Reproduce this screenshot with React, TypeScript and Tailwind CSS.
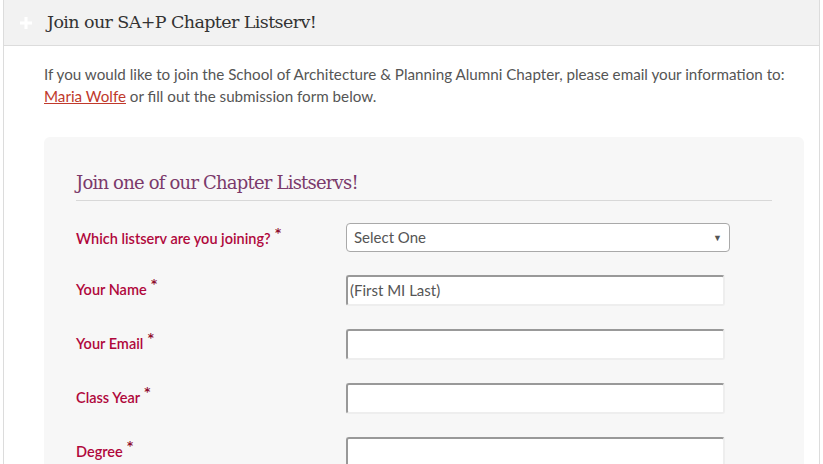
import React from "react";

const fields = [
  { label: "Your Name", placeholder: "(First MI Last)" },
  { label: "Your Email", placeholder: "" },
  { label: "Class Year", placeholder: "" },
  { label: "Degree", placeholder: "" },
];

function Label({ text }: { text: string }) {
  return (
    <label className="text-[14.5px] font-semibold text-[#b0083c] font-['Lato',sans-serif]">
      {text} <span className="relative -top-[3px] text-[18px] leading-none text-[#8e0b2c]">*</span>
    </label>
  );
}

export default function App() {
  return (
    <div className="h-[464px] overflow-hidden bg-white pl-[3px] pr-[3px]">
      <div className="border-x border-[#dcdcdc] min-h-[464px]">
        <div className="h-[46px] bg-[#f2f2f2] border-b border-[#dcdcdc] flex items-center">
          <span className="w-[43px] flex justify-center">
            <svg width="12" height="12" viewBox="0 0 12 12">
              <path d="M4.5 0h3v4.5H12v3H7.5V12h-3V7.5H0v-3h4.5z" fill="#fff" />
            </svg>
          </span>
          <h2 className="text-[17.5px] text-[#333] font-['DejaVu_Serif',serif] tracking-[-0.6px]">Join our SA+P Chapter Listserv!</h2>
        </div>

        <div className="pl-[40px] pr-[15px] pt-[17px] font-['Lato',sans-serif]">
          <p className="text-[15.2px] leading-[22px] text-[#555]">
            If you would like to join the School of Architecture &amp; Planning Alumni Chapter, please email your information to:{" "}
            <a className="text-[#c0392b] underline">Maria Wolfe</a> or fill out the submission form below.
          </p>

          <div className="mt-[30px] bg-[#f7f7f7] rounded-[6px] px-[32px] pt-[32px] pb-[40px]">
            <h3 className="text-[18px] text-[#7b3a6b] font-['DejaVu_Serif',serif] tracking-[-0.8px] pb-[4px] border-b border-[#d8d8d8]">
              Join one of our Chapter Listservs!
            </h3>

            <div className="mt-[22px] flex items-center">
              <div className="w-[270px]">
                <Label text="Which listserv are you joining?" />
              </div>
              <div className="w-[384px] h-[29px] bg-white border border-[#a9a9a9] rounded-[4px] flex items-center justify-between pl-[7px] pr-[7px]">
                <span className="text-[15px] text-[#555]">Select One</span>
                <span className="text-[9px] text-[#555]">▼</span>
              </div>
            </div>

            {fields.map((f) => (
              <div key={f.label} className="mt-[23px] flex items-center">
                <div className="w-[270px] -mt-[3px]">
                  <Label text={f.label} />
                </div>
                <div className="w-[379px] h-[31px] bg-white rounded-[3px] border-2 border-t-[#999] border-l-[#999] border-b-[#eee] border-r-[#eee] flex items-center pl-[2px]">
                  <span className="text-[15px] text-[#555]">{f.placeholder}</span>
                </div>
              </div>
            ))}
          </div>
        </div>
      </div>
    </div>
  );
}
